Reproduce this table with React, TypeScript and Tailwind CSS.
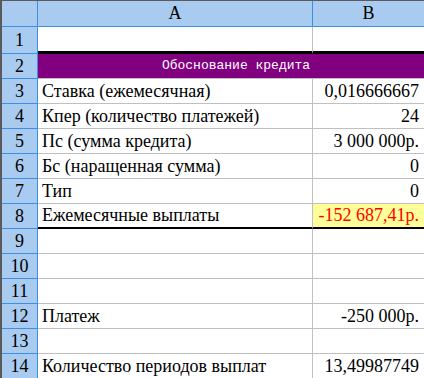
const rows: { n: number; a: string; b: string }[] = [
  { n: 3, a: 'Ставка (ежемесячная)', b: '0,016666667' },
  { n: 4, a: 'Кпер (количество платежей)', b: '24' },
  { n: 5, a: 'Пс (сумма кредита)', b: '3 000 000р.' },
  { n: 6, a: 'Бс (наращенная сумма)', b: '0' },
  { n: 7, a: 'Тип', b: '0' },
  { n: 8, a: 'Ежемесячные выплаты', b: '-152 687,41р.' },
  { n: 9, a: '', b: '' },
  { n: 10, a: '', b: '' },
  { n: 11, a: '', b: '' },
  { n: 12, a: 'Платеж', b: '-250 000р.' },
  { n: 13, a: '', b: '' },
  { n: 14, a: 'Количество периодов выплат', b: '13,49987749' },
];

function RowHead({ n, h }: { n?: number; h: string }) {
  return (
    <div
      className={`${h} flex items-center justify-center border-r border-b border-[#3d8fe6] bg-[#a9cbef] text-[18px] text-black`}
    >
      {n}
    </div>
  );
}

export default function App() {
  return (
    <div className="h-[378px] w-[424px] overflow-hidden border-t border-l-2 border-[#5a5a5a] bg-white font-['Liberation_Serif','Times_New_Roman',serif]">
      <div className="grid grid-cols-[36px_275px_111px]">
        {/* header */}
        <RowHead h="h-[26px]" />
        <div className="flex h-[26px] items-center justify-center border-r border-b border-[#3d8fe6] bg-[#a9cbef] text-[18px]">
          A
        </div>
        <div className="flex h-[26px] items-center justify-center border-b border-[#3d8fe6] bg-[#a9cbef] text-[18px]">
          B
        </div>

        {/* row 1 */}
        <RowHead n={1} h="h-[27px]" />
        <div className="h-[27px] border-r border-b-[3px] border-r-[#c0c0c0] border-b-black" />
        <div className="h-[27px] border-b-[3px] border-black" />

        {/* row 2 - merged title */}
        <RowHead n={2} h="h-[25px]" />
        <div className="col-span-2 flex h-[25px] border-b border-[#c0c0c0]">
          <div className="flex h-[24px] w-full items-center justify-center bg-[#800080] pl-[10px] font-['Liberation_Mono',monospace] text-[13px] text-white">
            Обоснование кредита
          </div>
        </div>

        {rows.map((r) => {
          const thick = r.n === 8;
          return [
            <RowHead key={`h${r.n}`} n={r.n} h="h-[25px]" />,
            <div
              key={`a${r.n}`}
              className={`flex h-[25px] items-center border-r border-r-[#c0c0c0] pl-[4px] text-[18px] whitespace-nowrap text-black ${
                thick ? 'border-b-2 border-b-black' : 'border-b border-b-[#c0c0c0]'
              }`}
            >
              {r.a}
            </div>,
            <div
              key={`b${r.n}`}
              className={`flex h-[25px] items-center justify-end pr-[5px] text-[18px] whitespace-nowrap ${
                thick
                  ? 'border-b-2 border-b-black bg-[#ffff99] text-[#ff0000]'
                  : 'border-b border-b-[#c0c0c0] text-black'
              }`}
            >
              {r.b}
            </div>,
          ];
        })}
      </div>
    </div>
  );
}
